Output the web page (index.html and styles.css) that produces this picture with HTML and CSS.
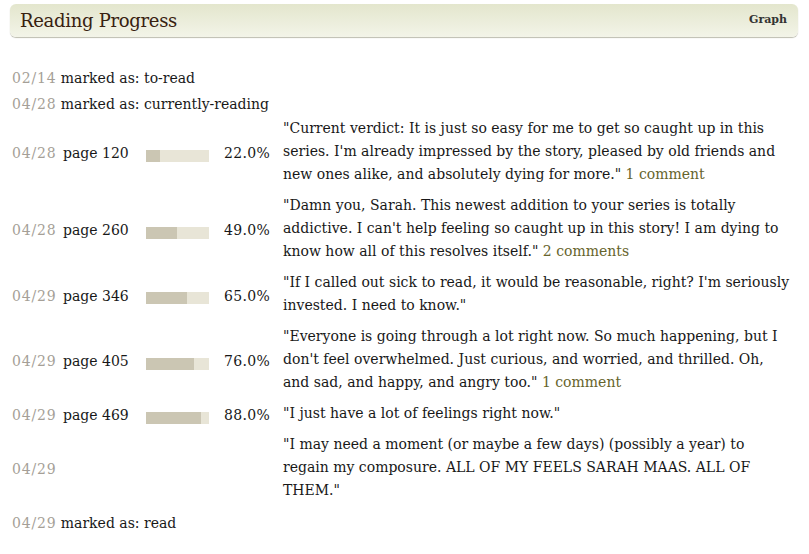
FILE: index.html
```html
<!DOCTYPE html>
<html>
<head>
<meta charset="utf-8">
<link rel="stylesheet" href="styles.css">
</head>
<body>
<div class="page">
  <div class="header">
    <h2 class="title">Reading Progress</h2>
    <a class="graph">Graph</a>
  </div>
  <div class="list">
    <div class="marked"><span class="date">02/14</span> marked as: to-read</div>
    <div class="marked"><span class="date">04/28</span> marked as: currently-reading</div>

    <div class="row">
      <span class="date">04/28</span>
      <span class="pg">page 120</span>
      <span class="bar"><span class="fill" style="width:22%"></span></span>
      <span class="pct">22.0%</span>
      <p class="quote">"Current verdict: It is just so easy for me to get so caught up in this<br>series. I'm already impressed by the story, pleased by old friends and<br>new ones alike, and absolutely dying for more." <a class="cm">1 comment</a></p>
    </div>

    <div class="row">
      <span class="date">04/28</span>
      <span class="pg">page 260</span>
      <span class="bar"><span class="fill" style="width:49%"></span></span>
      <span class="pct">49.0%</span>
      <p class="quote">"Damn you, Sarah. This newest addition to your series is totally<br>addictive. I can't help feeling so caught up in this story! I am dying to<br>know how all of this resolves itself." <a class="cm">2 comments</a></p>
    </div>

    <div class="row">
      <span class="date">04/29</span>
      <span class="pg">page 346</span>
      <span class="bar"><span class="fill" style="width:65%"></span></span>
      <span class="pct">65.0%</span>
      <p class="quote">"If I called out sick to read, it would be reasonable, right? I'm seriously<br>invested. I need to know."</p>
    </div>

    <div class="row">
      <span class="date">04/29</span>
      <span class="pg">page 405</span>
      <span class="bar"><span class="fill" style="width:76%"></span></span>
      <span class="pct">76.0%</span>
      <p class="quote">"Everyone is going through a lot right now. So much happening, but I<br>don't feel overwhelmed. Just curious, and worried, and thrilled. Oh,<br>and sad, and happy, and angry too." <a class="cm">1 comment</a></p>
    </div>

    <div class="row">
      <span class="date">04/29</span>
      <span class="pg">page 469</span>
      <span class="bar"><span class="fill" style="width:88%"></span></span>
      <span class="pct">88.0%</span>
      <p class="quote">"I just have a lot of feelings right now."</p>
    </div>

    <div class="row">
      <span class="date">04/29</span>
      <span class="pg"></span>
      <span class="nobar"></span>
      <span class="pct"></span>
      <p class="quote">"I may need a moment (or maybe a few days) (possibly a year) to<br>regain my composure. ALL OF MY FEELS SARAH MAAS. ALL OF<br>THEM."</p>
    </div>

    <div class="marked"><span class="date">04/29</span> marked as: read</div>
  </div>
</div>
</body>
</html>
```

FILE: styles.css
```css
html, body {
  margin: 0;
  padding: 0;
  background: #ffffff;
}
body {
  font-family: "DejaVu Serif", Georgia, serif;
  color: #181818;
  font-size: 14px;
}
.page {
  width: 809px;
  padding-top: 4px;
}
.header {
  margin: 0 11px 0 10px;
  height: 33px;
  border-radius: 6px;
  background: linear-gradient(#e3e6cd, #f3f4e8);
  box-shadow: 0 1px 1px #bdbdb0;
  display: flex;
  align-items: center;
  justify-content: space-between;
  padding: 0 11px 0 10px;
}
.title {
  margin: 0;
  font-family: "DejaVu Serif", Georgia, serif;
  font-weight: normal;
  font-size: 18px;
  color: #382110;
  letter-spacing: -0.3px;
}
.graph {
  font-size: 11px;
  font-weight: bold;
  color: #333;
  margin-top: -2px;
}
.list {
  margin-top: 28px;
  padding-left: 12px;
}
.marked {
  line-height: 26px;
  white-space: nowrap;
}
.date {
  color: #a59f97;
  letter-spacing: 0.8px;
}
.row {
  display: grid;
  grid-template-columns: 51px 83px 63px 61px 1fr;
  align-items: center;
  padding-bottom: 8px;
}
.row .date, .pg {
  white-space: nowrap;
  margin-top: 3px;
}
.bar {
  display: block;
  height: 12px;
  background: #e8e5d7;
  margin-top: 8px;
}
.fill {
  display: block;
  height: 100%;
  background: #cbc6b3;
}
.pct {
  text-align: right;
  font-size: 14px;
  letter-spacing: 0.3px;
  margin-top: 3px;
}
.quote {
  margin: 0 0 0 13px;
  line-height: 23px;
  white-space: nowrap;
}
.cm {
  color: #66642c;
}
```
